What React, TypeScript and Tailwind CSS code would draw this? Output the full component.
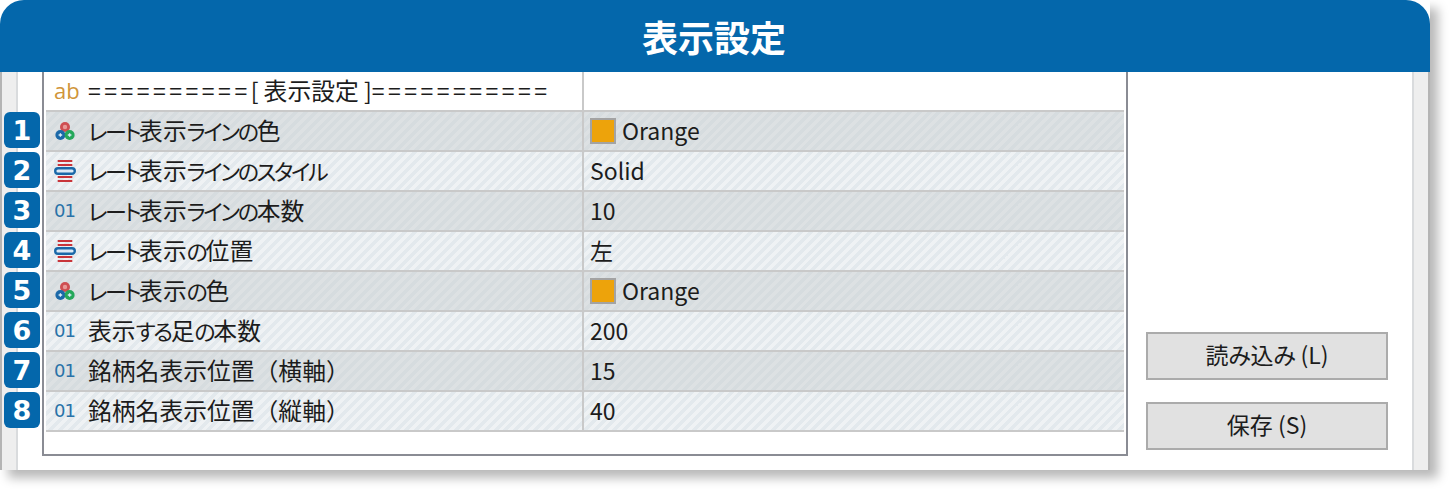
const JP = "font-['Noto_Sans_CJK_JP','Noto_Sans',sans-serif]";

function ColorIcon() {
  return (
    <svg width="24" height="24" viewBox="0 0 24 24" className="block">
      <circle cx="12" cy="8" r="5" fill="#cf4f52" />
      <circle cx="12" cy="8" r="2.2" fill="#e89a98" />
      <circle cx="7.4" cy="16" r="5" fill="#1a68a8" />
      <circle cx="16.6" cy="16" r="5" fill="#25a85a" />
      <path d="M7.4 14.2v3.6M5.6 16h3.6M16.6 14.2v3.6M14.8 16h3.6" stroke="#d8ecf8" strokeWidth="1.3" />
    </svg>
  );
}

function LineIcon() {
  return (
    <svg width="24" height="24" viewBox="0 0 24 24" className="block">
      <path d="M4.7 2h14.6M4.7 6h14.6M4.7 18h14.6M4.7 22h14.6" stroke="#c8353a" strokeWidth="2" />
      <rect x="2.2" y="9.2" width="19.6" height="5.6" rx="2.8" fill="#dbeaf6" stroke="#1a68a8" strokeWidth="2.4" />
    </svg>
  );
}

function NumIcon() {
  return <span className="ml-[1px] font-['DejaVu_Sans',sans-serif] text-[18px] leading-none tracking-[-1px] text-[#2a72a8]">01</span>;
}

function AbIcon() {
  return <span className="ml-[1px] font-['Open_Sans',sans-serif] text-[22px] leading-none text-[#d0953a]">ab</span>;
}

function Swatch() {
  return <span className="mr-[6px] block h-[26px] w-[26px] border-2 border-[#a3a3a3] bg-[#eda30b]" />;
}

function Jp({ text, kana }: { text: string; kana: string }) {
  return (
    <>
      {text.split(/([ぁ-んァ-ヶー]+)/).map((p, i) =>
        i % 2 === 1 ? (
          <span key={i} className={kana}>
            {p}
          </span>
        ) : (
          <span key={i}>{p}</span>
        ),
      )}
    </>
  );
}

type Row = { icon: "c" | "l" | "n"; name: string; value: string; swatch?: boolean };

const rows: Row[] = [
  { icon: "c", name: "レート表示ラインの色", value: "Orange", swatch: true },
  { icon: "l", name: "レート表示ラインのスタイル", value: "Solid" },
  { icon: "n", name: "レート表示ラインの本数", value: "10" },
  { icon: "l", name: "レート表示の位置", value: "左" },
  { icon: "c", name: "レート表示の色", value: "Orange", swatch: true },
  { icon: "n", name: "表示する足の本数", value: "200" },
  { icon: "n", name: "銘柄名表示位置（横軸）", value: "15" },
  { icon: "n", name: "銘柄名表示位置（縦軸）", value: "40" },
];

const dark =
  "bg-[repeating-linear-gradient(135deg,#d6dcdf_0px,#d6dcdf_3.5px,#dde1e3_3.5px,#dde1e3_7px)]";
const light =
  "bg-[repeating-linear-gradient(135deg,#e3e9ed_0px,#e3e9ed_3.5px,#eff2f4_3.5px,#eff2f4_7px)]";

function Icon({ k }: { k: Row["icon"] }) {
  if (k === "c") return <ColorIcon />;
  if (k === "l") return <LineIcon />;
  return <NumIcon />;
}

export default function App() {
  return (
    <div className={`h-[490px] w-[1450px] overflow-hidden bg-white ${JP} text-[#1c1c1c]`}>
      <div className="flex h-[470px] w-[1430px] flex-col shadow-[8px_8px_10px_rgba(0,0,0,0.28)]">
        <div className="flex h-[72px] shrink-0 items-center justify-center rounded-t-[24px] bg-[#0467ab] pr-[2px] text-[36px] font-bold text-white">
          表示設定
        </div>
        <div className="relative flex min-h-0 flex-1 border-x-2 border-[#b4b4b4] bg-white">
          <div className="w-[16px] shrink-0 border-r-2 border-[#d9dbdd] bg-[#eeeeee]" />
          <div className="flex min-w-0 flex-1 pl-[24px]">
            <div className="h-[384px] w-[1086px] shrink-0 border-x-2 border-b-2 border-[#8a8c94] px-[2px]">
              <div className="flex h-[40px] border-b-2 border-[#c9c9c9] bg-white">
                <div className="flex w-[538px] shrink-0 items-center border-r-2 border-[#c9c9c9] text-[23.8px]">
                  <div className="flex w-[42px] shrink-0 pb-[3px] pl-[7px]">
                    <AbIcon />
                  </div>
                  <span className="whitespace-pre pb-[2px]">
                    <span className="text-[23px] tracking-[3.5px]">==========</span>
                    <span className="text-[23px]">[ </span>表示設定<span className="text-[23px]"> ]</span>
                    <span className="text-[23px] tracking-[3.5px]">===========</span>
                  </span>
                </div>
                <div className="flex-1" />
              </div>
              {rows.map((r, i) => (
                <div key={i} className={`flex h-[40px] border-b-2 border-[#c9c9c9] ${i % 2 === 0 ? dark : light}`}>
                  <div className="flex w-[538px] shrink-0 items-center border-r-2 border-[#c9c9c9] text-[23.8px]">
                    <div className="flex w-[42px] shrink-0 pl-[7px]">
                      <Icon k={r.icon} />
                    </div>
                    <span className="whitespace-pre pb-[2px]">
                      <Jp text={r.name} kana="text-[22px] tracking-[-2.3px] [font-feature-settings:'palt']" />
                    </span>
                  </div>
                  <div className="flex flex-1 items-center pl-[6px] text-[23px]">
                    {r.swatch && <Swatch />}
                    <span className="pb-[2px]">{r.value}</span>
                  </div>
                </div>
              ))}
            </div>
          </div>
          <div className="flex w-[266px] shrink-0 flex-col justify-end gap-[22px] pb-[20px]">
            {["読み込み (L)", "保存 (S)"].map((t) => (
              <button key={t} className="h-[48px] w-[242px] border-2 border-[#ababab] bg-[#e1e1e1] pb-[3px] text-[23px] text-[#1c1c1c]">
                <Jp text={t} kana="tracking-[-0.5px] [font-feature-settings:'palt']" />
              </button>
            ))}
          </div>
          <div className="w-[16px] shrink-0 border-l-2 border-[#d9dbdd] bg-[#eeeeee]" />
          <div className="absolute left-[2px] top-[40px] flex flex-col gap-[4px]">
            {rows.map((_, i) => (
              <div
                key={i}
                className="flex h-[36px] w-[36px] items-center justify-center rounded-[6px] bg-[#0467ab] font-['DejaVu_Sans',sans-serif] text-[27px] font-bold leading-none text-white"
              >
                {i + 1}
              </div>
            ))}
          </div>
        </div>
      </div>
    </div>
  );
}
